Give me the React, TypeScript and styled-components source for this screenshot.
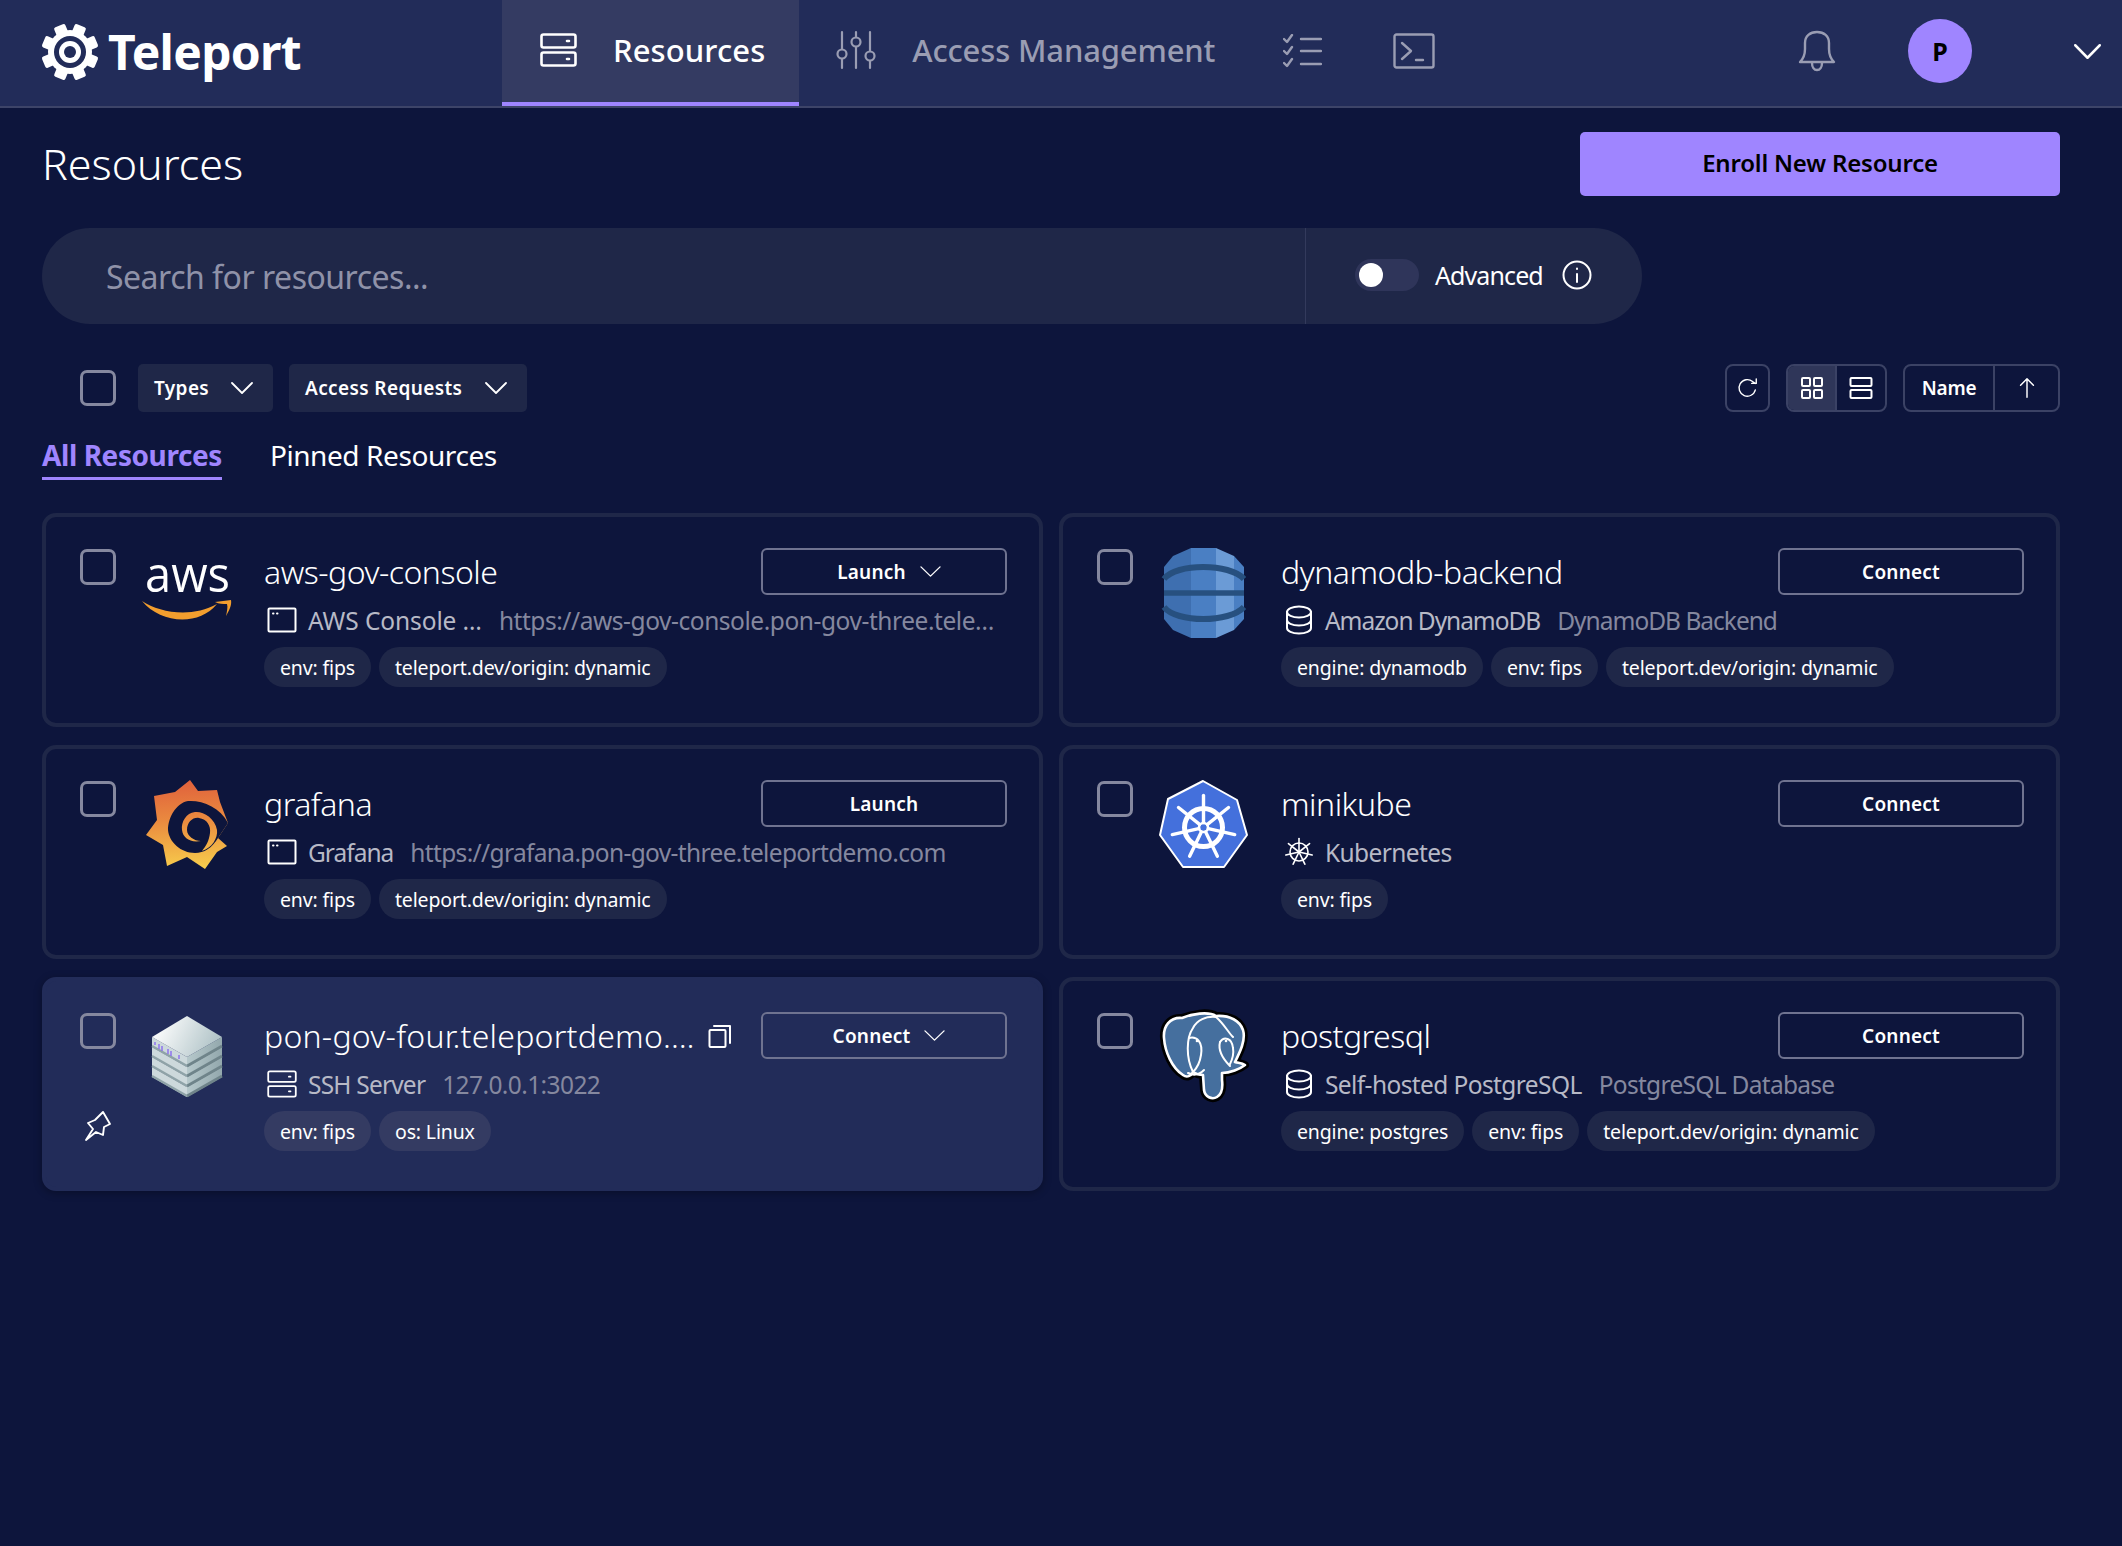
import React from "react";
import styled, { createGlobalStyle } from "styled-components";

const FONT = `"Noto Sans", "Open Sans", sans-serif`;
const BG = "#0d153c";

const Global = createGlobalStyle`
  html, body { margin: 0; padding: 0; background: ${BG}; }
  body { font-family: ${FONT}; color: #fff; }
  * { box-sizing: border-box; }
`;

const Page = styled.div`
  width: 2122px;
  height: 1546px;
  background: ${BG};
  overflow: hidden;
`;

const Header = styled.header`
  display: flex;
  align-items: stretch;
  height: 108px;
  background: #222c59;
  border-bottom: 2px solid #3d4468;
`;

const Brand = styled.div`
  display: flex;
  align-items: center;
  gap: 9px;
  width: 502px;
  padding: 0 0 3px 41px;
  font-size: 48px;
  font-weight: 700;
  letter-spacing: -0.7px;
`;

const NavTab = styled.div<{ $active?: boolean }>`
  display: flex;
  align-items: center;
  gap: 36px;
  padding: 0 ${(p) => (p.$active ? "34px" : "38px")} 2px ${(p) => (p.$active ? "38px" : "37px")};
  height: 106px;
  font-size: 31px;
  font-weight: 500;
  letter-spacing: ${(p) => (p.$active ? "0.1px" : "-0.15px")};
  color: ${(p) => (p.$active ? "#fff" : "#9a9db3")};
  background: ${(p) => (p.$active ? "#343b62" : "transparent")};
  border-bottom: 4px solid ${(p) => (p.$active ? "#9f85ff" : "transparent")};
`;

const NavIcon = styled.div<{ $w: number }>`
  display: flex;
  align-items: center;
  justify-content: center;
  width: ${(p) => p.$w}px;
  height: 106px;
  padding-bottom: 4px;
  color: #9a9db3;
`;

const HeaderRight = styled.div`
  display: flex;
  align-items: center;
  margin-left: auto;
  padding: 0 21px 4px 0;
`;

const Bell = styled.div`
  display: flex;
  color: #9a9db3;
  margin-right: 71px;
`;

const Avatar = styled.div`
  display: flex;
  align-items: center;
  justify-content: center;
  width: 64px;
  height: 64px;
  border-radius: 50%;
  background: #9f85ff;
  color: #000;
  font-size: 25px;
  font-weight: 700;
  margin-right: 102px;
`;

const Main = styled.main`
  padding: 24px 62px 0 42px;
`;

const TitleRow = styled.div`
  display: flex;
  justify-content: space-between;
  align-items: center;
  height: 64px;
`;

const Title = styled.h1`
  margin: 0 0 2px;
  font-size: 43px;
  font-weight: 300;
  letter-spacing: 0;
`;

const PrimaryButton = styled.button`
  width: 480px;
  height: 64px;
  padding: 0 0 3px;
  border: 0;
  border-radius: 5px;
  background: #9f85ff;
  color: #000;
  font-family: ${FONT};
  font-size: 24px;
  font-weight: 600;
  letter-spacing: -0.2px;
`;

const SearchBar = styled.div`
  display: flex;
  align-items: stretch;
  width: 1600px;
  height: 96px;
  margin-top: 32px;
  background: #1f2748;
  border-radius: 48px;
`;

const SearchText = styled.div`
  display: flex;
  align-items: center;
  width: 1264px;
  padding-left: 64px;
  border-right: 1px solid #333a5c;
  font-size: 32px;
  color: #8f92a8;
  letter-spacing: -0.5px;
`;

const AdvancedBox = styled.div`
  display: flex;
  align-items: center;
  padding: 0 0 2px 49px;
  font-size: 25px;
  letter-spacing: -0.9px;
`;

const Toggle = styled.div`
  display: flex;
  align-items: center;
  width: 64px;
  height: 32px;
  padding-left: 4px;
  border-radius: 16px;
  background: #2f355a;
  margin-right: 16px;
`;

const Knob = styled.div`
  width: 24px;
  height: 24px;
  border-radius: 50%;
  background: #fff;
`;

const InfoWrap = styled.div`
  display: flex;
  margin-left: 19px;
`;

const FilterRow = styled.div`
  display: flex;
  align-items: center;
  height: 48px;
  margin-top: 40px;
`;

const Check = styled.div`
  flex: none;
  width: 36px;
  height: 36px;
  border: 3px solid #85889f;
  border-radius: 7px;
`;

const FilterCheck = styled(Check)`
  margin: 0 22px 0 38px;
`;

const FilterButton = styled.div<{ $w: number }>`
  display: flex;
  align-items: center;
  justify-content: space-between;
  width: ${(p) => p.$w}px;
  height: 48px;
  margin-right: 16px;
  padding: 0 20px 0 16px;
  border-radius: 5px;
  background: #1f2748;
  font-size: 19px;
  font-weight: 600;
  letter-spacing: 0.38px;
`;

const Tools = styled.div`
  display: flex;
  align-items: center;
  gap: 16px;
  margin-left: auto;
`;

const ToolGroup = styled.div`
  display: flex;
  height: 48px;
  border: 2px solid #3b4265;
  border-radius: 8px;
  overflow: hidden;
`;

const ToolCell = styled.div<{ $w: number; $active?: boolean; $divider?: boolean }>`
  display: flex;
  align-items: center;
  justify-content: center;
  width: ${(p) => p.$w}px;
  background: ${(p) => (p.$active ? "#2f3659" : "transparent")};
  border-right: ${(p) => (p.$divider ? "2px solid #3b4265" : "0")};
  font-size: 19px;
  font-weight: 600;
  letter-spacing: -0.2px;
`;

const Tabs = styled.div`
  display: flex;
  gap: 48px;
  height: 53px;
  margin-top: 18px;
`;

const TabLabel = styled.div<{ $active?: boolean }>`
  height: 50px;
  line-height: 50px;
  font-size: 28px;
  font-weight: ${(p) => (p.$active ? 700 : 400)};
  letter-spacing: -0.42px;
  color: ${(p) => (p.$active ? "#9f85ff" : "#fff")};
  border-bottom: ${(p) => (p.$active ? "3px solid #9f85ff" : "0")};
`;

const Grid = styled.div`
  display: grid;
  grid-template-columns: 1001px 1001px;
  grid-auto-rows: 214px;
  gap: 18px 16px;
  margin-top: 30px;
`;

const Card = styled.article<{ $hover?: boolean }>`
  display: flex;
  padding: 31px 32px 0 34px;
  border: 4px solid ${(p) => (p.$hover ? "#222c59" : "#1f2748")};
  border-radius: 14px;
  background: ${(p) => (p.$hover ? "#222c59" : "transparent")};
  box-shadow: ${(p) => (p.$hover ? "0 2px 8px rgba(0,0,0,.3)" : "none")};
`;

const CheckCol = styled.div`
  display: flex;
  flex-direction: column;
  align-items: center;
  flex: none;
  width: 36px;
  padding-top: 1px;
`;

const PinWrap = styled.div`
  display: flex;
  margin-top: 61px;
`;

const LogoBox = styled.div`
  flex: none;
  width: 90px;
  height: 90px;
  margin: 0 32px 0 26px;
  svg { display: block; overflow: visible; }
`;

const Content = styled.div`
  flex: 1;
  min-width: 0;
`;

const TopRow = styled.div`
  display: flex;
  align-items: center;
  height: 47px;
`;

const Name = styled.div<{ $spacing?: number }>`
  font-size: 32px;
  font-weight: 300;
  letter-spacing: ${(p) => p.$spacing ?? -0.5}px;
  white-space: nowrap;
`;

const CopyWrap = styled.div`
  display: flex;
  margin-left: 13px;
`;

const ActionButton = styled.button<{ $menu?: boolean }>`
  display: flex;
  align-items: center;
  justify-content: center;
  gap: 14px;
  flex: none;
  width: 246px;
  height: 47px;
  margin-left: auto;
  padding: 0 0 0 ${(p) => (p.$menu ? "10px" : "0")};
  border: 2px solid #6f7390;
  border-radius: 6px;
  background: transparent;
  color: #fff;
  font-family: ${FONT};
  font-size: 19px;
  font-weight: 600;
  letter-spacing: 0.2px;
`;

const MetaRow = styled.div`
  display: flex;
  align-items: center;
  height: 44px;
  margin-top: 3px;
  padding-left: 3px;
  font-size: 24.5px;
  white-space: nowrap;
`;

const MetaIcon = styled.div`
  display: flex;
  justify-content: center;
  flex: none;
  width: 30px;
  margin-right: 11px;
  color: #fff;
`;

const Kind = styled.div<{ $spacing?: number }>`
  flex: none;
  color: #b7b9c6;
  letter-spacing: ${(p) => p.$spacing ?? -0.6}px;
`;

const Address = styled.div<{ $spacing?: number }>`
  min-width: 0;
  margin-left: 17px;
  color: #85889f;
  letter-spacing: ${(p) => p.$spacing ?? -0.7}px;
`;

const TagRow = styled.div`
  display: flex;
  gap: 8px;
  margin-top: 5px;
`;

const Tag = styled.div<{ $hover?: boolean }>`
  display: flex;
  align-items: center;
  height: 40px;
  padding: 0 16px;
  border-radius: 20px;
  background: ${(p) => (p.$hover ? "#343b62" : "#1f2748")};
  font-size: 19.5px;
  letter-spacing: -0.15px;
  white-space: nowrap;
`;

type IP = { w?: number; h?: number; sw?: number };
const Svg = ({ w, h, vb, sw = 2, children }: { w: number; h: number; vb: string; sw?: number; children: React.ReactNode }) => (
  <svg width={w} height={h} viewBox={vb} fill="none" stroke="currentColor" strokeWidth={sw} strokeLinecap="round" strokeLinejoin="round">
    {children}
  </svg>
);

const ServerIcon = ({ w = 37, h = 34, sw = 2.6 }: IP) => (
  <Svg w={w} h={h} vb="0 0 37 34" sw={sw}>
    <rect x="1.5" y="1.5" width="34" height="13" rx="2" />
    <rect x="1.5" y="19.5" width="34" height="13" rx="2" />
    <path d="M27 8h2M27 26h2" />
  </Svg>
);
const SlidersIcon = () => (
  <Svg w={40} h={40} vb="0 0 40 40" sw={2.2}>
    <path d="M6 2v17M6 29v9M20 2v5M20 17v21M34 2v19M34 31v7" />
    <circle cx="6" cy="24" r="4.5" />
    <circle cx="20" cy="12" r="4.5" />
    <circle cx="34" cy="26" r="4.5" />
  </Svg>
);
const ChecklistIcon = () => (
  <Svg w={39} h={34} vb="0 0 39 34" sw={2.4}>
    <path d="M1 5l3 3 5-7M1 17l3 3 5-7M1 29l3 3 5-7M18 5h20M18 17h20M18 30h20" />
  </Svg>
);
const TerminalIcon = () => (
  <Svg w={42} h={36} vb="0 0 42 36" sw={2.4}>
    <rect x="1.5" y="1.5" width="39" height="33" rx="2" />
    <path d="M9 10l9 8-9 8M23 27h7" />
  </Svg>
);
const BellIcon = () => (
  <Svg w={40} h={44} vb="0 0 40 44" sw={2.4}>
    <path d="M3 33c4-4 5-7 5-13V14C8 7 13 3 20 3s12 4 12 11v6c0 6 1 9 5 13z" />
    <path d="M15 34c0 4 2 7 5 7s5-3 5-7" />
  </Svg>
);
const Chevron = ({ w = 22, h = 12, sw = 1.8 }: IP) => (
  <svg width={w} height={h} viewBox="0 0 22 12" fill="none" stroke="currentColor" strokeWidth={sw} strokeLinecap="round" strokeLinejoin="round" preserveAspectRatio="none">
    <path d="M1 1l10 10L21 1" />
  </svg>
);
const InfoIcon = () => (
  <Svg w={30} h={30} vb="0 0 30 30" sw={2}>
    <circle cx="15" cy="15" r="13.5" />
    <path d="M15 14v8M15 8.5v.5" />
  </Svg>
);
const RefreshIcon = () => (
  <Svg w={22} h={22} vb="0 0 24 24" sw={1.5}>
    <path d="M20 14a9 9 0 1 1-3-9l3 2M21 2v5h-5" />
  </Svg>
);
const GridIcon = () => (
  <Svg w={24} h={24} vb="0 0 24 24" sw={2}>
    <rect x="2" y="2" width="8" height="8" rx="1" />
    <rect x="14" y="2" width="8" height="8" rx="1" />
    <rect x="2" y="14" width="8" height="8" rx="1" />
    <rect x="14" y="14" width="8" height="8" rx="1" />
  </Svg>
);
const RowsIcon = () => (
  <Svg w={24} h={24} vb="0 0 24 24" sw={2}>
    <rect x="1.5" y="2" width="21" height="8" rx="1" />
    <rect x="1.5" y="14" width="21" height="8" rx="1" />
  </Svg>
);
const ArrowUp = () => (
  <Svg w={20} h={22} vb="0 0 20 24" sw={1.6}>
    <path d="M10 22V2M3 9l7-7 7 7" />
  </Svg>
);
const WindowIcon = () => (
  <Svg w={30} h={26} vb="0 0 30 26" sw={2}>
    <rect x="1.5" y="1.5" width="27" height="23" rx="1" />
    <path d="M6 6.5h.5M10 6.5h.5" />
  </Svg>
);
const DbIcon = () => (
  <Svg w={28} h={30} vb="0 0 28 30" sw={2}>
    <ellipse cx="14" cy="7" rx="12" ry="5.5" />
    <path d="M2 7v16c0 3 5 5.5 12 5.5S26 26 26 23V7M2 15c0 3 5 5.5 12 5.5S26 18 26 15" />
  </Svg>
);
const spokes = [0, 51.4, 102.8, 154.3, 205.7, 257.1, 308.6];
const KubeMini = () => (
  <Svg w={30} h={30} vb="-15 -15 30 30" sw={1.6}>
    <circle r="9" />
    {spokes.map((a) => (
      <path key={a} d="M0 0V-13.5" transform={`rotate(${a})`} />
    ))}
  </Svg>
);
const PinIcon = () => (
  <Svg w={28} h={32} vb="0 0 28 32" sw={1.9}>
    <path d="M19 2l7 12-6 3-1 8-7-3-10 8 7-11-5-6 7-3z" />
  </Svg>
);
const CopyIcon = () => (
  <Svg w={24} h={24} vb="0 0 24 24" sw={2}>
    <rect x="1.5" y="6" width="16" height="17" rx="1" />
    <path d="M6 2h16v17" />
  </Svg>
);
const GearLogo = () => (
  <svg width={58} height={58} viewBox="-29 -29 58 58" fill="#fff">
    {[0, 45, 90, 135, 180, 225, 270, 315].map((a) => (
      <rect key={a} x="-6" y="-28.5" width="12" height="12" rx="2" transform={`rotate(${a + 22.5})`} />
    ))}
    <circle r="22" />
    <circle r="16" fill="#222c59" />
    <circle r="11" />
    <circle r="6" fill="#222c59" />
  </svg>
);

const AwsLogo = () => (
  <svg width={90} height={90} viewBox="12 18 90 90">
    <text x="15" y="62" fontFamily='"Open Sans", sans-serif' fontSize="49" fill="#fff" textLength="85" lengthAdjust="spacingAndGlyphs">aws</text>
    <path d="M12 71C30 83 62 88 87 74 68 97 30 93 12 71Z" fill="#f29e2e" />
    <path d="M85 72l16-2c1 5-2 11-5 16 1-5 2-9 1-12-4 0-8 0-12-2Z" fill="#f29e2e" />
  </svg>
);

const GrafanaLogo = () => (
  <svg width={90} height={90} viewBox="12 10 90 90">
    <defs>
      <linearGradient id="gf" gradientUnits="userSpaceOnUse" x1="55" y1="10" x2="60" y2="98">
        <stop offset="0" stopColor="#e0603c" />
        <stop offset="0.45" stopColor="#ea8a3f" />
        <stop offset="1" stopColor="#f7cc4c" />
      </linearGradient>
    </defs>
    <path
      d="M60 10 L68 21 L87 20 L90 32 L98 53 L88 68 L97 76 L87 82 L75 99 L57 87 L37 96 L33 75 L16 65 L27 50 L24 26 L45 22Z"
      fill="url(#gf)"
    />
    <path
      d="M98 53 C90 37 72 30 58 31 C46 33 38 48 38 60 C39 72 51 83 65 83 C74 83 82 78 88 68 Z"
      fill={BG}
    />
    <path
      d="M72 81 C82 78 88 68 87 60 C85 48 73 41 65 42 C56 43 51 52 52 60 C53 68 60 73 71 71 C64 71 57 66 57 60 C57 52 63 47 69 48 C77 49 81 56 80 63 C79 71 76 76 72 81Z"
      fill="url(#gf)"
    />
  </svg>
);

const ServerLogo = () => (
  <svg width={90} height={90} viewBox="12 12 90 90">
    <defs>
      <linearGradient id="st" x1="0" y1="0" x2="1" y2="0.3">
        <stop offset="0.2" stopColor="#f7f9f9" />
        <stop offset="1" stopColor="#b4c6ca" />
      </linearGradient>
      <linearGradient id="sr" x1="0" y1="0" x2="1" y2="0">
        <stop offset="0" stopColor="#b6c8cb" />
        <stop offset="1" stopColor="#93a8ad" />
      </linearGradient>
    </defs>
    {[30, 20, 10, 0].map((k) => (
      <g key={k}>
        <polygon points={`22,${37 + k} 57,${57 + k} 57,${67 + k} 22,${47 + k}`} fill="#cdd9dc" />
        <polygon points={`57,${57 + k} 92,${37 + k} 92,${47 + k} 57,${67 + k}`} fill="url(#sr)" />
        <path d={`M57 ${66 + k} L92 ${46 + k}`} stroke="#6f848a" strokeWidth="2.6" fill="none" />
        <path d={`M22 ${46 + k} L57 ${66 + k}`} stroke="#8fa3a8" strokeWidth="2.2" fill="none" />
      </g>
    ))}
    <polygon points="57,16 92,37 57,57 22,37" fill="url(#st)" />
    <path d="M25 42v3M29 44v5M32 46v5M38 49v5M41 51v5M49 55v4" stroke="#8a6cf0" strokeWidth="1.4" />
  </svg>
);

const DynamoLogo = () => (
  <svg width={90} height={90} viewBox="9 13 90 90">
    <polygon points="14,32 23,21 41,13 41,103 23,95 14,84" fill="#3e6fb0" />
    <polygon points="41,13 66,13 66,103 41,103" fill="#4a7fc3" />
    <polygon points="66,13 84,21 84,95 66,103" fill="#6b9bd6" />
    <polygon points="84,21 94,32 94,84 84,95" fill="#4a7fc3" />
    <g stroke="#27507f" fill="none">
      <path d="M14 44 C26 28 80 28 94 44" strokeWidth="6" />
      <path d="M14 58 H94" strokeWidth="5.5" />
      <path d="M14 72 C26 88 80 88 94 72" strokeWidth="6" />
    </g>
  </svg>
);

const KubeLogo = () => (
  <svg width={90} height={90} viewBox="9 10 90 90">
    <polygon points="53,11 87,30 97,65 74,97 33,97 10,65 18,29" fill="#4470dc" stroke="#fff" strokeWidth="2" strokeLinejoin="round" />
    <g transform="translate(53.5 57.5)" stroke="#fff" fill="none" strokeLinecap="round">
      <circle r="19" strokeWidth="5" />
      {spokes.map((a) => (
        <path key={a} d="M0 -5V-32" strokeWidth="3.4" transform={`rotate(${a})`} />
      ))}
      <circle r="4.5" strokeWidth="2.6" />
    </g>
  </svg>
);

const PgShape = "M32 18 C20 17 13 26 14 38 C15 52 22 68 33 75 C37 78 41 76 43 72 C46 74 50 75 53 75 L54 90 C55 97 62 100 67 97 C72 94 73 88 72 80 L72 73 C80 73 90 69 95 65 C92 63 88 63 85 62 C90 52 96 40 93 30 C90 21 80 15 66 16 C58 11 42 14 32 18Z";
const PgLogo = () => (
  <svg width={90} height={90} viewBox="9 12 90 90" fill="none" strokeLinecap="round" strokeLinejoin="round">
    <path d={PgShape} stroke="#000" strokeWidth="8" />
    <path d={PgShape} fill="#456f9e" stroke="#fff" strokeWidth="2.6" />
    <g stroke="#fff" strokeWidth="2">
      <path d="M43 72 C36 58 36 38 43 28 C47 20 56 16 66 17" />
      <path d="M66 17 C74 24 78 32 83 37" />
      <path d="M39 38 C47 36 53 42 51 55 C50 62 47 68 43 72" />
      <path d="M70 42 C74 36 82 38 83 48 C84 54 82 60 80 64" />
      <path d="M70 42 C68 50 72 58 80 66" />
      <path d="M38 73 C44 76 50 74 54 70" />
    </g>
    <circle cx="47" cy="41" r="1.3" fill="#fff" />
    <circle cx="76" cy="41" r="1.3" fill="#fff" />
  </svg>
);

type Res = {
  name: string;
  nameSpacing?: number;
  copy?: boolean;
  action: string;
  chevron?: boolean;
  logo: React.ReactNode;
  metaIcon: React.ReactNode;
  kind: string;
  kindSpacing?: number;
  addr?: string;
  addrSpacing?: number;
  tags: string[];
  hover?: boolean;
};

const resources: Res[] = [
  { name: "aws-gov-console", action: "Launch", chevron: true, logo: <AwsLogo />, metaIcon: <WindowIcon />, kind: "AWS Console …", kindSpacing: -0.1, addr: "https://aws-gov-console.pon-gov-three.tele…", addrSpacing: -0.45, tags: ["env: fips", "teleport.dev/origin: dynamic"] },
  { name: "dynamodb-backend", action: "Connect", logo: <DynamoLogo />, metaIcon: <DbIcon />, kind: "Amazon DynamoDB", kindSpacing: -1.05, addr: "DynamoDB Backend", addrSpacing: -1, tags: ["engine: dynamodb", "env: fips", "teleport.dev/origin: dynamic"] },
  { name: "grafana", action: "Launch", logo: <GrafanaLogo />, metaIcon: <WindowIcon />, kind: "Grafana", kindSpacing: -1, addr: "https://grafana.pon-gov-three.teleportdemo.com", addrSpacing: -0.65, tags: ["env: fips", "teleport.dev/origin: dynamic"] },
  { name: "minikube", action: "Connect", logo: <KubeLogo />, metaIcon: <KubeMini />, kind: "Kubernetes", tags: ["env: fips"] },
  { name: "pon-gov-four.teleportdemo.…", nameSpacing: 0.25, copy: true, action: "Connect", chevron: true, logo: <ServerLogo />, metaIcon: <ServerIcon w={30} h={28} sw={2.2} />, kind: "SSH Server", kindSpacing: -0.8, addr: "127.0.0.1:3022", addrSpacing: -0.6, tags: ["env: fips", "os: Linux"], hover: true },
  { name: "postgresql", action: "Connect", logo: <PgLogo />, metaIcon: <DbIcon />, kind: "Self-hosted PostgreSQL", addr: "PostgreSQL Database", tags: ["engine: postgres", "env: fips", "teleport.dev/origin: dynamic"] },
];

const ResourceCard = ({ r }: { r: Res }) => (
  <Card $hover={r.hover}>
    <CheckCol>
      <Check />
      {r.hover && (
        <PinWrap>
          <PinIcon />
        </PinWrap>
      )}
    </CheckCol>
    <LogoBox>{r.logo}</LogoBox>
    <Content>
      <TopRow>
        <Name $spacing={r.nameSpacing}>{r.name}</Name>
        {r.copy && (
          <CopyWrap>
            <CopyIcon />
          </CopyWrap>
        )}
        <ActionButton $menu={r.chevron}>
          {r.action}
          {r.chevron && <Chevron w={21} h={11} sw={1.4} />}
        </ActionButton>
      </TopRow>
      <MetaRow>
        <MetaIcon>{r.metaIcon}</MetaIcon>
        <Kind $spacing={r.kindSpacing}>{r.kind}</Kind>
        {r.addr && <Address $spacing={r.addrSpacing}>{r.addr}</Address>}
      </MetaRow>
      <TagRow>
        {r.tags.map((t) => (
          <Tag key={t} $hover={r.hover}>
            {t}
          </Tag>
        ))}
      </TagRow>
    </Content>
  </Card>
);

export default function App() {
  return (
    <Page>
      <Global />
      <Header>
        <Brand>
          <GearLogo />
          Teleport
        </Brand>
        <NavTab $active>
          <ServerIcon />
          Resources
        </NavTab>
        <NavTab>
          <SlidersIcon />
          Access Management
        </NavTab>
        <NavIcon $w={99}>
          <ChecklistIcon />
        </NavIcon>
        <NavIcon $w={124}>
          <TerminalIcon />
        </NavIcon>
        <HeaderRight>
          <Bell>
            <BellIcon />
          </Bell>
          <Avatar>P</Avatar>
          <Chevron w={27} h={15} sw={2} />
        </HeaderRight>
      </Header>
      <Main>
        <TitleRow>
          <Title>Resources</Title>
          <PrimaryButton>Enroll New Resource</PrimaryButton>
        </TitleRow>
        <SearchBar>
          <SearchText>Search for resources...</SearchText>
          <AdvancedBox>
            <Toggle>
              <Knob />
            </Toggle>
            Advanced
            <InfoWrap>
              <InfoIcon />
            </InfoWrap>
          </AdvancedBox>
        </SearchBar>
        <FilterRow>
          <FilterCheck />
          <FilterButton $w={135}>
            Types
            <Chevron />
          </FilterButton>
          <FilterButton $w={238}>
            Access Requests
            <Chevron />
          </FilterButton>
          <Tools>
            <ToolGroup>
              <ToolCell $w={41}>
                <RefreshIcon />
              </ToolCell>
            </ToolGroup>
            <ToolGroup>
              <ToolCell $w={49} $active $divider>
                <GridIcon />
              </ToolCell>
              <ToolCell $w={48}>
                <RowsIcon />
              </ToolCell>
            </ToolGroup>
            <ToolGroup>
              <ToolCell $w={90} $divider>
                Name
              </ToolCell>
              <ToolCell $w={63}>
                <ArrowUp />
              </ToolCell>
            </ToolGroup>
          </Tools>
        </FilterRow>
        <Tabs>
          <TabLabel $active>All Resources</TabLabel>
          <TabLabel>Pinned Resources</TabLabel>
        </Tabs>
        <Grid>
          {resources.map((r) => (
            <ResourceCard key={r.name} r={r} />
          ))}
        </Grid>
      </Main>
    </Page>
  );
}
